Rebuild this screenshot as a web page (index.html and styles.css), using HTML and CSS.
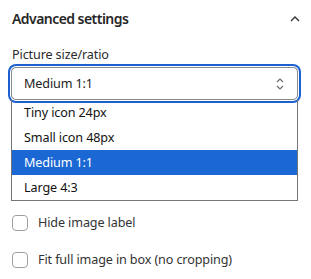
FILE: index.html
```html
<!DOCTYPE html>
<html>
<head>
<meta charset="utf-8">
<link rel="stylesheet" href="styles.css">
</head>
<body>
<div class="panel">
  <div class="header">
    <span class="title">Advanced settings</span>
    <svg class="collapse" width="10" height="7" viewBox="0 0 10 7"><path d="M1 6 L5 2 L9 6" fill="none" stroke="#333" stroke-width="1.4"/></svg>
  </div>
  <div class="field-label">Picture size/ratio</div>
  <div class="select">
    <span>Medium 1:1</span>
    <svg class="updown" width="8" height="14" viewBox="0 0 8 14"><path d="M1 5 L4 2 L7 5 M1 9 L4 12 L7 9" fill="none" stroke="#6a6a6a" stroke-width="1.1"/></svg>
  </div>
  <ul class="listbox">
    <li class="option">Tiny icon 24px</li>
    <li class="option">Small icon 48px</li>
    <li class="option selected">Medium 1:1</li>
    <li class="option">Large 4:3</li>
  </ul>
  <label class="check"><span class="box"></span>Hide image label</label>
  <label class="check"><span class="box"></span>Fit full image in box (no cropping)</label>
</div>
</body>
</html>
```
FILE: styles.css
```css
html, body { margin: 0; padding: 0; background: #fff; }
body {
  font-family: "Noto Sans", sans-serif;
  color: #222;
  font-size: 12.6px;
  letter-spacing: -0.12px;
}
.panel { padding: 0 11px 0 11px; width: 287px; }
.header {
  display: flex;
  justify-content: space-between;
  align-items: center;
  height: 36px;
  padding-left: 1px;
}
.title { font-size: 14px; font-weight: 600; color: #262626; letter-spacing: -0.55px; }
.collapse { margin-right: -2px; margin-top: 1px; }
.field-label { padding-left: 1px; margin-top: 9px; height: 22px; line-height: 20px; color: #2a2a2a; }
.select {
  box-sizing: border-box;
  height: 33px;
  border: 1px solid #8a8a8a;
  border-radius: 5px;
  box-shadow: 0 0 0 1px #fff, 0 0 0 3px #1c5fd0;
  display: flex;
  align-items: center;
  justify-content: space-between;
  padding: 0 13px 0 12px;
  color: #222;
}
.updown { margin-top: 1px; }
.listbox {
  list-style: none;
  margin: 0;
  padding: 0;
  border: 1px solid #767676;
  border-top: none;
}
.option { height: 25px; line-height: 25px; padding-left: 12px; color: #111; }
.option.selected { background: #1b67d3; color: #fff; }
.check {
  display: flex;
  align-items: center;
  gap: 10px;
  height: 37px;
  padding-left: 1px;
  color: #333;
}
.check:first-of-type { margin-top: 3px; }
.box {
  box-sizing: border-box;
  width: 16px;
  height: 16px;
  border: 1px solid #a0a0a0;
  border-radius: 4px;
}
```
